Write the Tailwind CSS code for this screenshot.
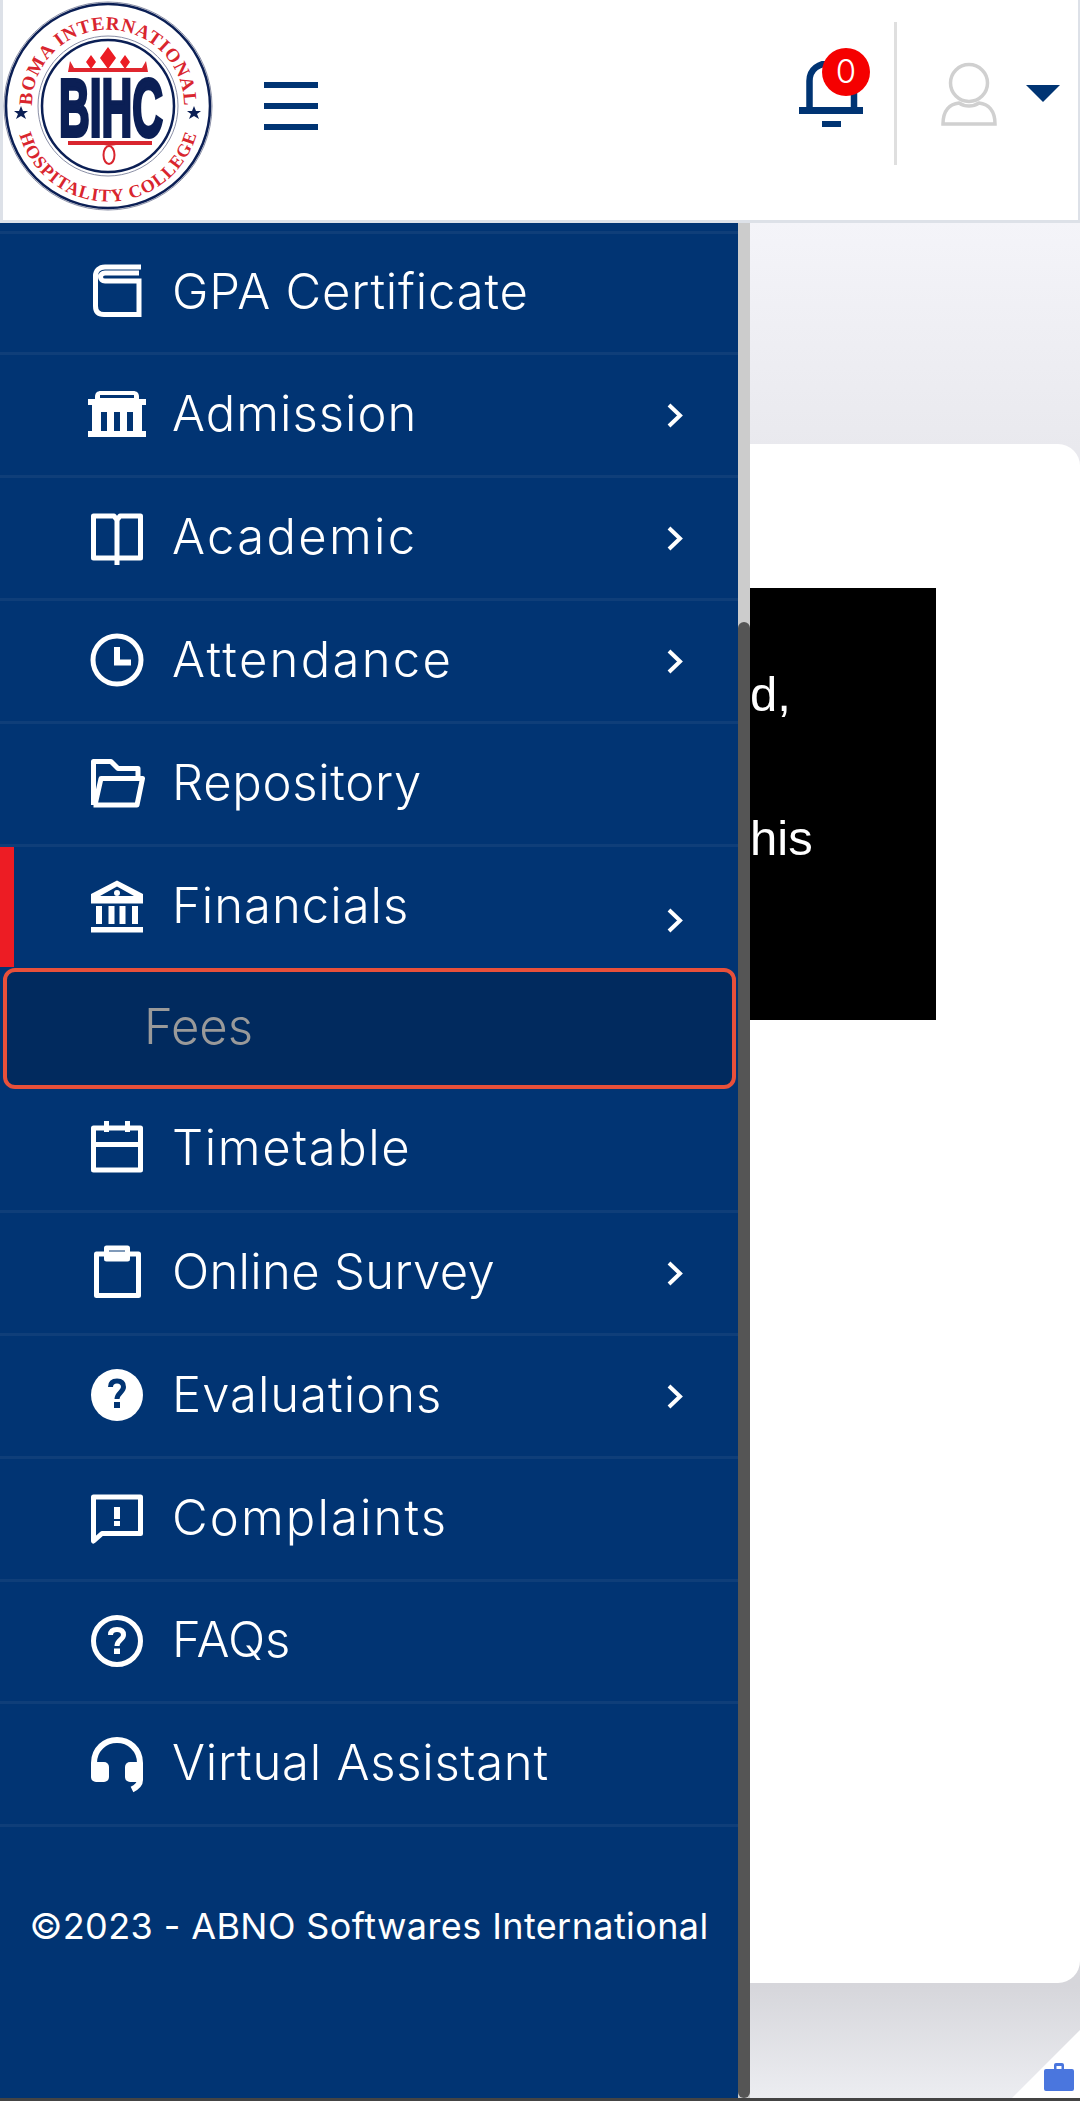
<!DOCTYPE html>
<html lang="en">
<head>
    <meta charset="UTF-8" />
    <meta name="viewport" content="width=device-width, initial-scale=1.0" />
    <title>Fees | BIHC</title>
    <script src="https://cdn.jsdelivr.net/npm/@tailwindcss/browser@4"></script>
</head>
<body class="h-[2101px] overflow-hidden bg-[#444444] font-['Inter',sans-serif]">

    <!-- top bar -->
    <header class="h-[223px] pb-[3px] border-l-[3px] border-r-[2px] border-b-[3px] border-[#dde1e8] bg-white flex items-center">
        <svg class="-ml-[3px] w-[216px] h-[216px] shrink-0 -mt-[2px]" viewBox="0 0 216 216">
            <defs>
                <path id="arcTop" d="M33 118A76 76 0 1 1 183 118" />
                <path id="arcBottom" d="M16.500 100A92 92 0 1 0 199.500 100" />
            </defs>
            <circle cx="108" cy="106" r="104" fill="none" stroke="#8a8fa6" stroke-width="1" />
            <circle cx="108" cy="106" r="102" fill="none" stroke="#0b1f55" stroke-width="2.5" />
            <circle cx="108" cy="106" r="70" fill="none" stroke="#8a8fa6" stroke-width="1" />
            <circle cx="108" cy="106" r="66" fill="none" stroke="#0b1f55" stroke-width="2.5" />
            <text font-family="'Liberation Serif',serif" font-weight="700" font-size="19" fill="#d9252e" text-anchor="middle"><textPath href="#arcTop" startOffset="50%" textLength="238">BOMA INTERNATIONAL</textPath></text>
            <text font-family="'Liberation Serif',serif" font-weight="700" font-size="18" fill="#d9252e" text-anchor="middle"><textPath href="#arcBottom" startOffset="50%" textLength="238">HOSPITALITY COLLEGE</textPath></text>
            <polygon points="21,106 23,111 28,111 24,114 26,119 21,116 16,119 18,114 14,111 19,111" fill="#0b1f55" />
            <polygon points="194,106 196,111 201,111 197,114 199,119 194,116 189,119 191,114 187,111 192,111" fill="#0b1f55" />
            <path d="M70 61 74 68H142L146 61 148 72H68Z" fill="#e0262e" />
            <path d="M108 47 116 58 108 69 100 58ZM91 55 96 62 91 69 86 62ZM125 55 130 62 125 69 120 62Z" fill="#ec1c24" />
            <text x="111" y="136" font-family="'Liberation Sans Narrow','Liberation Sans',sans-serif" font-weight="700" font-size="82" fill="#0b1f55" stroke="#0b1f55" stroke-width="4" text-anchor="middle" textLength="104" lengthAdjust="spacingAndGlyphs">BIHC</text>
            <path d="M68 141H152V145H116C112 146 108 146 104 145H68Z" fill="#d9252e" />
            <ellipse cx="109" cy="155" rx="5.5" ry="9" fill="none" stroke="#d9252e" stroke-width="2" />
        </svg>
        <div class="ml-[48px] -mt-[6px] w-[54px] flex flex-col gap-[15px]">
            <div class="h-[6px] bg-[#003473]"></div>
            <div class="h-[6px] bg-[#003473]"></div>
            <div class="h-[6px] bg-[#003473]"></div>
        </div>
        <div class="ml-auto relative w-[64px] h-[70px] -mt-[26px] mr-[31px]">
            <svg class="absolute left-0 top-0 w-[64px] h-[70px]" viewBox="0 0 64 70">
                <path d="M10.500 49V20C10.500 8 20 2 32 2S55 8 55 20V49" fill="none" stroke="#003473" stroke-width="6.5" />
                <rect x="0" y="46" width="64" height="7" fill="#003473" />
                <rect x="23" y="60" width="19" height="6" fill="#003473" />
            </svg>
            <span class="absolute left-[23px] -top-[13px] w-[48px] h-[48px] rounded-full bg-[#f50000] text-white text-[33px] font-light flex items-center justify-center">0</span>
        </div>
        <div class="w-[3px] h-[143px] bg-[#dfdfdf] -mt-[31px]"></div>
        <svg class="ml-[44px] w-[56px] h-[64px] -mt-[30px]" viewBox="0 0 56 64">
            <circle cx="28" cy="21" r="18.5" fill="none" stroke="#d0d0d0" stroke-width="3.5" />
            <path d="M2 62C2 48 9 42 18 41C24 45 32 45 38 41C47 42 54 48 54 62Z" fill="none" stroke="#d0d0d0" stroke-width="3.5" />
        </svg>
        <svg class="ml-[29px] mr-[18px] w-[34px] h-[17px] -mt-[31px]" viewBox="0 0 34 17">
            <polygon points="0,0 34,0 17,17" fill="#003473" />
        </svg>
    </header>

    <main class="relative h-[1875px] bg-[linear-gradient(180deg,#f4f4f9_0%,#e9e9ee_12%,#d6d6db_94%,#ecedf1_100%)] pl-[750px] pt-[221px]">

        <!-- page card, mostly covered by the drawer -->
        <div class="h-[1539px] bg-white rounded-tr-[22px] rounded-br-[22px] pt-[144px]">
            <div class="w-[186px] h-[432px] bg-black text-white text-[49px] leading-[144px] overflow-hidden pt-[34px] font-['Liberation_Sans',sans-serif]">
                <p>d,</p>
                <p>his</p>
            </div>
        </div>

        <!-- bottom right corner -->
        <div class="absolute right-0 bottom-0 w-[68px] h-[68px] bg-white [clip-path:polygon(100%_0,100%_100%,0_100%)]"></div>
        <svg class="absolute right-[6px] bottom-[6px] w-[30px] h-[30px]" viewBox="0 0 30 30">
            <path d="M10 7V3a2 2 0 0 1 2-2h6a2 2 0 0 1 2 2v4h8a2 2 0 0 1 2 2v18a2 2 0 0 1-2 2H2a2 2 0 0 1-2-2V9a2 2 0 0 1 2-2ZM12.500 7h5V4h-5Z" fill="#4a76de" fill-rule="evenodd" />
        </svg>

        <!-- drawer -->
        <div class="absolute left-0 top-0 w-[750px] h-[1875px] flex">
            <nav class="w-[738px] bg-[#013473] text-white text-[49px] font-light">
                <div class="h-[11px] border-b-[3px] border-[#0f3e79]"></div>

                <a class="flex items-center h-[121px] border-b-[3px] border-[#0f3e79] pl-[87px]">
                    <svg class="w-[60px] h-[60px] shrink-0" viewBox="0 0 60 60" fill="none" stroke="white" stroke-width="5">
                        <path d="M54 4H18C12 4 8.500 8 8.500 13V43C8.500 49 12 51.500 17 51.500H52V18H18C12 18 12 10 18 10H52" />
                    </svg>
                    <span class="ml-[25px] -mt-[3px] tracking-[0.8px]">GPA Certificate</span>
                </a>

                <a class="flex items-center h-[123px] border-b-[3px] border-[#0f3e79] pl-[87px]">
                    <svg class="w-[60px] h-[60px] shrink-0" viewBox="0 0 60 60">
                        <path d="M8 12C8 8 10 6 14 6H46C50 6 52 8 52 12V14H59V20H55V46H59V52H1V46H5V20H1V14H8Z" fill="white" />
                        <rect x="13" y="10" width="34" height="3" fill="#013473" />
                        <rect x="14" y="27" width="6" height="19" fill="#013473" />
                        <rect x="27" y="27" width="6" height="19" fill="#013473" />
                        <rect x="40" y="27" width="6" height="19" fill="#013473" />
                    </svg>
                    <span class="ml-[25px] -mt-[3px] tracking-[1px]">Admission</span>
                    <svg class="ml-auto mr-[55px] w-[16px] h-[25px]" viewBox="0 0 16 25" fill="none" stroke="white" stroke-width="4">
                        <path d="M2 2 13 12.500 2 23" />
                    </svg>
                </a>

                <a class="flex items-center h-[123px] border-b-[3px] border-[#0f3e79] pl-[87px]">
                    <svg class="w-[60px] h-[60px] shrink-0" viewBox="0 0 60 60" fill="none" stroke="white" stroke-width="5">
                        <path d="M6.500 8H27L30 12 33 8H53.500V50H6.500ZM30 12V57" stroke-linejoin="round" />
                    </svg>
                    <span class="ml-[25px] -mt-[3px] tracking-[2.3px]">Academic</span>
                    <svg class="ml-auto mr-[55px] w-[16px] h-[25px]" viewBox="0 0 16 25" fill="none" stroke="white" stroke-width="4">
                        <path d="M2 2 13 12.500 2 23" />
                    </svg>
                </a>

                <a class="flex items-center h-[123px] border-b-[3px] border-[#0f3e79] pl-[87px]">
                    <svg class="w-[60px] h-[60px] shrink-0" viewBox="0 0 60 60" fill="none" stroke="white" stroke-width="5">
                        <circle cx="30" cy="29" r="24" />
                        <path d="M30 16V31.500H44" stroke-width="6" />
                    </svg>
                    <span class="ml-[25px] -mt-[3px] tracking-[2.3px]">Attendance</span>
                    <svg class="ml-auto mr-[55px] w-[16px] h-[25px]" viewBox="0 0 16 25" fill="none" stroke="white" stroke-width="4">
                        <path d="M2 2 13 12.500 2 23" />
                    </svg>
                </a>

                <a class="flex items-center h-[123px] border-b-[3px] border-[#0f3e79] pl-[87px]">
                    <svg class="w-[60px] h-[60px] shrink-0" viewBox="0 0 60 60" fill="none" stroke="white" stroke-width="5" stroke-linejoin="round">
                        <path d="M6.500 51V7.500H24L31 14.500H51V24M6.500 51H50L55.500 24.500H14L8 51" />
                    </svg>
                    <span class="ml-[25px] -mt-[3px] tracking-[0.7px]">Repository</span>
                </a>

                <a class="relative flex items-center h-[121px] pl-[87px]">
                    <span class="absolute left-0 top-0 w-[14px] h-[120px] bg-[#ed1c24]"></span>
                    <svg class="w-[60px] h-[60px] shrink-0" viewBox="0 0 60 60" fill="white">
                        <path d="M30 2.500 56 16V25.500H4V16ZM30 8.500 13 18H47Z" fill-rule="evenodd" />
                        <circle cx="30" cy="15" r="3" />
                        <rect x="9" y="28" width="6" height="18" />
                        <rect x="21.500" y="28" width="6" height="18" />
                        <rect x="32.500" y="28" width="6" height="18" />
                        <rect x="45" y="28" width="6" height="18" />
                        <rect x="4" y="49" width="52" height="5.500" />
                    </svg>
                    <span class="ml-[25px] -mt-[3px] tracking-[1px]">Financials</span>
                    <svg class="ml-auto mr-[55px] w-[16px] h-[25px] mt-[26px]" viewBox="0 0 16 25" fill="none" stroke="white" stroke-width="4">
                        <path d="M2 2 13 12.500 2 23" />
                    </svg>
                </a>

                <a class="flex items-center h-[121px] ml-[3px] mr-[2px] border-[4px] border-[#e8503a] rounded-[12px] bg-[#012a5e] pl-[137px] text-[#9a9a9a]"><span class="-mt-[4px]">Fees</span></a>

                <a class="flex items-center h-[124px] border-b-[3px] border-[#0f3e79] pl-[87px]">
                    <svg class="w-[60px] h-[60px] shrink-0" viewBox="0 0 60 60" fill="none" stroke="white" stroke-width="5">
                        <path d="M6.500 8H53.500V50H6.500ZM6.500 24.500H53.500M19.500 1V12M40.500 1V12" stroke-linejoin="round" />
                    </svg>
                    <span class="ml-[25px] -mt-[3px] tracking-[1.6px]">Timetable</span>
                </a>

                <a class="flex items-center h-[123px] border-b-[3px] border-[#0f3e79] pl-[87px]">
                    <svg class="w-[60px] h-[60px] shrink-0" viewBox="0 0 60 60" fill="none" stroke="white" stroke-width="5">
                        <path d="M9.500 11H51.500V52.500H9.500ZM19.500 5H40.500V16H19.500Z" stroke-linejoin="round" />
                    </svg>
                    <span class="ml-[25px] -mt-[3px] tracking-[0.3px]">Online Survey</span>
                    <svg class="ml-auto mr-[55px] w-[16px] h-[25px]" viewBox="0 0 16 25" fill="none" stroke="white" stroke-width="4">
                        <path d="M2 2 13 12.500 2 23" />
                    </svg>
                </a>

                <a class="flex items-center h-[123px] border-b-[3px] border-[#0f3e79] pl-[87px]">
                    <svg class="w-[60px] h-[60px] shrink-0" viewBox="0 0 60 60">
                        <circle cx="30" cy="29" r="26" fill="white" />
                        <path d="M23.500 21C23.500 17 26 15 30 15S36.500 17 36.500 21C36.500 26 30 27 30 33" fill="none" stroke="#013473" stroke-width="5" />
                        <rect x="27" y="36" width="6" height="6" fill="#013473" />
                    </svg>
                    <span class="ml-[25px] -mt-[3px] tracking-[1px]">Evaluations</span>
                    <svg class="ml-auto mr-[55px] w-[16px] h-[25px]" viewBox="0 0 16 25" fill="none" stroke="white" stroke-width="4">
                        <path d="M2 2 13 12.500 2 23" />
                    </svg>
                </a>

                <a class="flex items-center h-[123px] border-b-[3px] border-[#0f3e79] pl-[87px]">
                    <svg class="w-[60px] h-[60px] shrink-0" viewBox="0 0 60 60" fill="none" stroke="white" stroke-width="5">
                        <path d="M6.500 8H53.500V44.500H15L6.500 52Z" stroke-linejoin="round" />
                        <rect x="27" y="18" width="6" height="12" fill="white" stroke="none" />
                        <rect x="27" y="32" width="6" height="5" fill="white" stroke="none" />
                    </svg>
                    <span class="ml-[25px] -mt-[3px] tracking-[2.1px]">Complaints</span>
                </a>

                <a class="flex items-center h-[122px] border-b-[3px] border-[#0f3e79] pl-[87px]">
                    <svg class="w-[60px] h-[60px] shrink-0" viewBox="0 0 60 60" fill="none" stroke="white" stroke-width="5">
                        <circle cx="30" cy="29" r="23.500" />
                        <path d="M23.500 23C23.500 19 26 17.500 30 17.500S36.500 19 36.500 23C36.500 27.500 30 28 30 34" />
                        <rect x="27" y="36.500" width="6" height="5.500" fill="white" stroke="none" />
                    </svg>
                    <span class="ml-[25px] -mt-[3px]">FAQs</span>
                </a>

                <a class="flex items-center h-[123px] border-b-[3px] border-[#0f3e79] pl-[87px]">
                    <svg class="w-[60px] h-[60px] shrink-0" viewBox="0 0 60 60">
                        <path d="M7 34V29C7 15 18 6 30 6S53 15 53 29V46C53 50 50 53 45 55.500" fill="none" stroke="white" stroke-width="6" />
                        <rect x="4" y="28" width="18" height="20" rx="5" fill="white" />
                        <rect x="38" y="28" width="18" height="20" rx="5" fill="white" />
                    </svg>
                    <span class="ml-[25px] -mt-[3px] tracking-[0.75px]">Virtual Assistant</span>
                </a>

                <p class="mt-[72px] text-[36px] tracking-[0.4px] font-normal text-center">©2023 - ABNO Softwares International</p>
            </nav>

            <!-- drawer scrollbar -->
            <div class="w-[12px] h-full bg-[#cccccc] pt-[399px]">
                <div class="h-[1476px] bg-[#555555] rounded-[6px]"></div>
            </div>
        </div>
    </main>

</body>
</html>
